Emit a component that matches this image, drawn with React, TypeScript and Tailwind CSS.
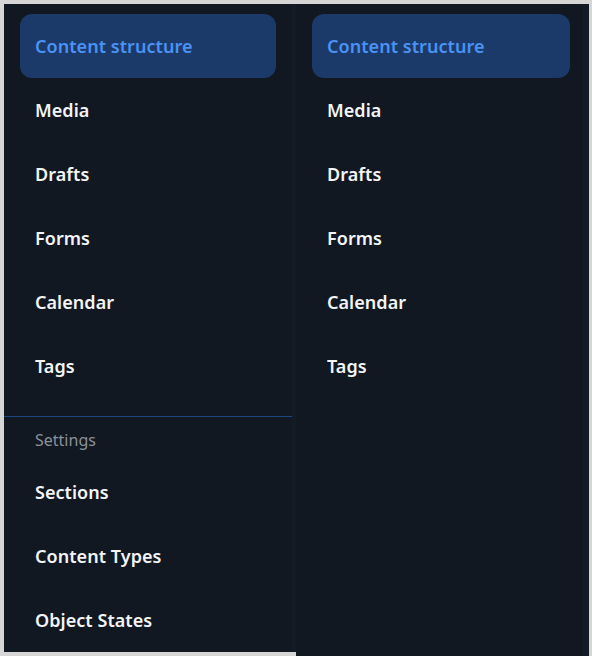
import React from 'react';

const mainItems = ['Content structure', 'Media', 'Drafts', 'Forms', 'Calendar', 'Tags'];
const settingsItems = ['Sections', 'Content Types', 'Object States'];

const NavItem: React.FC<{ label: string; active?: boolean }> = ({ label, active }) => (
    <div
        className={`flex h-16 items-center rounded-xl px-[15px] text-[18px] font-semibold tracking-[0.05px] ${
            active ? 'bg-[#1c3a69] text-[#4a92f4]' : 'text-[#f3f4f6]'
        }`}
    >
        {label}
    </div>
);

export default function App() {
    return (
        <div
            className="flex h-[656px] w-[592px] items-start bg-[#d6d6d6] pl-1 pt-1"
            style={{ fontFamily: '"Noto Sans", "Open Sans", sans-serif' }}
        >
            {/* first sidebar, with settings */}
            <div className="flex h-[648px] w-[292px] shrink-0 flex-col overflow-hidden border-r-4 border-[#131b26] bg-[#111821]">
                <div className="px-4 pt-[10px]">
                    {mainItems.map((item, i) => (
                        <NavItem key={item} label={item} active={i === 0} />
                    ))}
                </div>
                <div className="mt-[18px] h-px w-[288px] bg-[#1e4784]" />
                <div className="flex h-[49px] items-center px-[31px] pt-[4px] text-[16px] text-[#8b9099]">Settings</div>
                <div className="px-4">
                    {settingsItems.map((item) => (
                        <NavItem key={item} label={item} />
                    ))}
                </div>
            </div>

            {/* second sidebar */}
            <div className="flex h-[652px] w-[293px] shrink-0 flex-col border-r-[6px] border-[#131b26] bg-[#111821] pl-4 pr-[13px] pt-[10px]">
                {mainItems.map((item, i) => (
                    <NavItem key={item} label={item} active={i === 0} />
                ))}
            </div>
        </div>
    );
}
